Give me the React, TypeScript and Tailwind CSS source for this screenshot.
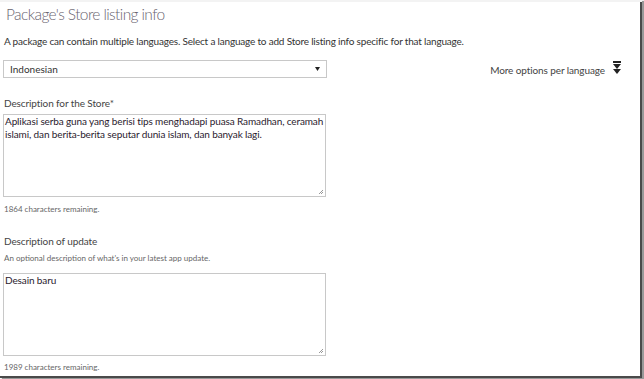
function MoreIcon() {
  return (
    <svg width="8" height="14" viewBox="0 0 8 14" className="shrink-0">
      <rect x="0" y="0" width="8" height="2" fill="#222" />
      <path d="M0 3 L8 3 L4 8 Z" fill="#222" />
      <path d="M0 8 L8 8 L4 13 Z" fill="#222" />
    </svg>
  );
}

function Field({ lines, top }: { lines: string[]; top: string }) {
  return (
    <div className={`${top} relative w-[323px] h-[83px] border border-[#c8c8c8] bg-white px-[1px] text-[10px] leading-[13px] tracking-[-0.12px] text-[#2a1a2e]`}>
      {lines.map((l) => (
        <div key={l} className="whitespace-nowrap">
          {l}
        </div>
      ))}
      <svg width="6" height="6" viewBox="0 0 6 6" className="absolute right-[1px] bottom-[1px]">
        <path d="M5 1 L1 5 M5 3 L3 5" stroke="#999" strokeWidth="1" />
      </svg>
    </div>
  );
}

export default function App() {
  return (
    <div className="w-[644px] h-[379px] bg-white overflow-hidden" style={{ fontFamily: 'Lato, "Open Sans", sans-serif' }}>
      <div className="w-[642px] h-[378px] border-t-2 border-[#f3f3f3] shadow-[2px_1px_1px_#999]">
        <div className="w-[642px] h-[376px] border-r-[2px] border-b-[2px] border-[#4a4a4a] pl-[3px]">
          <h1 className="pt-[2px] pl-[3px] text-[15.5px] leading-[20px] tracking-[-0.6px] font-light text-[#6a6570]">
            Package's Store listing info
          </h1>
          <p className="mt-[10px] pl-[1px] text-[10px] leading-[14px] tracking-[-0.19px] text-[#333]">
            A package can contain multiple languages. Select a language to add Store listing info specific for that language.
          </p>
          <div className="mt-[12px] flex items-center justify-between pr-[19px]">
            <div className="w-[324px] h-[18px] border border-[#c8c8c8] flex items-center justify-between pl-[6px] pr-[6px] text-[10px] text-[#333]">
              <span>Indonesian</span>
              <svg width="5" height="4" viewBox="0 0 5 4">
                <path d="M0 0 L5 0 L2.5 4 Z" fill="#222" />
              </svg>
            </div>
            <div className="flex items-start gap-[8px]">
              <span className="mt-[2px] text-[10px] leading-[14px] tracking-[-0.1px] text-[#444]">More options per language</span>
              <MoreIcon />
            </div>
          </div>
          <p className="mt-[18px] pl-[1px] text-[10px] leading-[14px] tracking-[-0.1px] text-[#444]">Description for the Store*</p>
          <Field
            top="mt-[4px]"
            lines={[
              "Aplikasi serba guna yang berisi tips menghadapi puasa Ramadhan, ceramah",
              "islami, dan berita-berita seputar dunia islam, dan banyak lagi.",
            ]}
          />
          <p className="mt-[7px] pl-[1px] text-[8px] leading-[10px] text-[#666]">1864 characters remaining.</p>
          <p className="mt-[20px] pl-[1px] text-[10px] leading-[14px] tracking-[-0.1px] text-[#444]">Description of update</p>
          <p className="mt-[5px] pl-[1px] text-[8px] leading-[10px] text-[#666]">
            An optional description of what's in your latest app update.
          </p>
          <Field top="mt-[10px]" lines={["Desain baru"]} />
          <p className="mt-[6px] pl-[1px] text-[8px] leading-[10px] text-[#666]">1989 characters remaining.</p>
        </div>
      </div>
    </div>
  );
}
